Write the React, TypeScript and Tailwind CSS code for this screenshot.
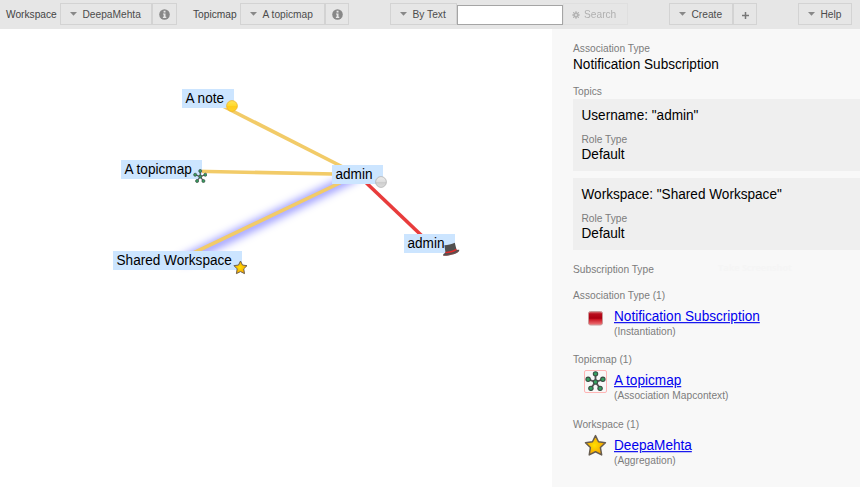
import React from "react";

const toolbarButton =
  "flex h-[22px] shrink-0 items-center border border-[#d3d3d3] bg-[#e6e6e6] text-[#4c4c4c]";

function Tall({ children }: { children: React.ReactNode }) {
  return <span className="inline-block origin-center translate-y-[0.8px] scale-y-[1.12]">{children}</span>;
}

function Caret() {
  return (
    <svg className="mr-[5.5px] ml-[9px] block shrink-0" width="7" height="4" viewBox="0 0 7 4">
      <path d="M0 0h7L3.5 3.8z" fill="#888" />
    </svg>
  );
}

function MenuButton({ label, className }: { label: string; className: string }) {
  return (
    <button className={`${toolbarButton} ${className}`}>
      <Caret />
      <Tall>{label}</Tall>
    </button>
  );
}

function InfoButton({ className }: { className: string }) {
  return (
    <button className={`${toolbarButton} justify-center ${className}`}>
      <svg width="11" height="11" viewBox="0 0 11 11">
        <circle cx="5.5" cy="5.5" r="5.3" fill="#888" />
        <path d="M4.6 1.8h1.9v1.7H4.6zM4 4.5h2.5v3.3h.8v1.1H3.9V7.8h.8V5.6H4z" fill="#e6e6e6" />
      </svg>
    </button>
  );
}

function Toolbar() {
  return (
    <header className="flex h-[29px] shrink-0 items-start bg-[#e6e6e6] pt-[3px] text-[10.2px] leading-[22px] text-[#444]">
      <span className="ml-[6px] w-[54px]"><Tall>Workspace</Tall></span>
      <MenuButton label="DeepaMehta" className="w-[92px]" />
      <InfoButton className="w-[25px]" />
      <span className="ml-[16px] w-[47px]"><Tall>Topicmap</Tall></span>
      <MenuButton label="A topicmap" className="w-[85px]" />
      <InfoButton className="w-[24px]" />
      <MenuButton label="By Text" className="ml-[41px] w-[67px]" />
      <input className="mt-[2px] h-[20px] w-[106px] shrink-0 border border-[#a5a5a5] bg-white" />
      <button className={`${toolbarButton} w-[65px] opacity-35`}>
        <svg className="mt-[2px] mr-[4px] ml-[8px]" width="8" height="8" viewBox="0 0 8 8">
          <circle cx="4" cy="4" r="2" fill="none" stroke="#555" strokeWidth="1.6" />
          <path d="M4 0v8M0 4h8M1.1 1.1l5.8 5.8M6.9 1.1L1.1 6.9" stroke="#555" strokeWidth="1" />
          <circle cx="4" cy="4" r="1" fill="#e6e6e6" />
        </svg>
        <Tall>Search</Tall>
      </button>
      <MenuButton label="Create" className="ml-[41px] w-[64px]" />
      <button className={`${toolbarButton} w-[24px] justify-center`}>
        <svg className="mt-[2px]" width="7" height="7" viewBox="0 0 7 7">
          <path d="M3.5 0v7M0 3.5h7" stroke="#777" strokeWidth="1.5" />
        </svg>
      </button>
      <MenuButton label="Help" className="ml-[41px] w-[54px]" />
    </header>
  );
}

function StarIcon({ size }: { size: number }) {
  return (
    <svg className="block" width={size} height={size} viewBox="0 0 22 22">
      <defs>
        <radialGradient id={`star${size}`} cx="45%" cy="50%" r="55%">
          <stop offset="0" stopColor="#ffe000" />
          <stop offset="1" stopColor="#f59c00" />
        </radialGradient>
      </defs>
      <path
        d="M11 1.5l2.9 5.9 6.6.9-4.800 4.700 1.200 7-5.900-3-6 3 1.100-7L1.400 8.300 8.100 7.400z"
        fill={`url(#star${size})`}
        stroke="#665c50"
        strokeWidth="1.4"
        strokeLinejoin="round"
      />
    </svg>
  );
}

function MapIcon({ size }: { size: number }) {
  const ends = [[11, 3], [3.3, 8.7], [18.7, 8.7], [6.2, 18.2], [15.8, 18.2]];
  return (
    <svg className="block" width={size} height={size} viewBox="0 0 22 22">
      {ends.map(([x, y]) => (
        <line key={x} x1="11" y1="11.5" x2={x} y2={y} stroke="#555" strokeWidth="1.9" />
      ))}
      {[...ends, [11, 11.5]].map(([x, y]) => (
        <circle key={`${x}-${y}`} cx={x} cy={y} r="2.3" fill="#35a060" stroke="#3c4c43" strokeWidth="1.1" />
      ))}
    </svg>
  );
}

function BallIcon({ tone }: { tone: "yellow" | "gray" }) {
  const yellow = tone === "yellow";
  return (
    <svg className="block" width="12" height="12" viewBox="0 0 12 12">
      <defs>
        <linearGradient id={`ball-${tone}`} x1="0" y1="0" x2="0" y2="1">
          <stop offset="0" stopColor={yellow ? "#ffe45a" : "#eeeeee"} />
          <stop offset=".48" stopColor={yellow ? "#ffd92c" : "#dddddd"} />
          <stop offset=".52" stopColor={yellow ? "#ffcc1c" : "#cccccc"} />
          <stop offset="1" stopColor={yellow ? "#ffd22a" : "#dedede"} />
        </linearGradient>
      </defs>
      <circle cx="6" cy="6" r="5.4" fill={`url(#ball-${tone})`} stroke={yellow ? "#efb62a" : "#b2b2b2"} strokeWidth=".8" />
    </svg>
  );
}

function HatIcon() {
  return (
    <svg className="block" width="18" height="15" viewBox="0 0 18 15">
      <path d="M2.4 3.2C5 3.3 9.6 2.3 12.8.8L14.6 8c1.2-.1 2.2-.4 2.6-.2.5 1.6-2.5 3.7-6.8 4.8-4.7 1.3-8.9 1.7-9.3.6C.9 12.3 2 11.5 3.5 10.7z" fill="#505050" />
      <path d="M3.2 9.9c3.5 0 8-1.3 11-3.1l.5 1.5c-2.9 2-7.5 3.2-11.1 3z" fill="#e02b2b" />
      <path d="M1.3 13.4c4.5.3 11.5-1.4 15.3-4.2" stroke="#a84848" strokeWidth=".5" fill="none" />
    </svg>
  );
}

const nodeClass =
  "absolute h-[18.5px] bg-[#cce5ff] pl-[3.5px] text-[13.6px] leading-[18px] whitespace-nowrap text-black";

function TopicmapCanvas() {
  return (
    <main className="relative w-[552px] shrink-0 overflow-hidden bg-white">
      <svg className="absolute inset-0" width="552" height="458" viewBox="0 29 552 458">
        <defs>
          <filter id="glow" filterUnits="userSpaceOnUse" x="140" y="140" width="260" height="160">
            <feGaussianBlur stdDeviation="4.5" />
          </filter>
        </defs>
        <line x1="357.5" y1="175" x2="181.5" y2="261" stroke="#0000ff" strokeOpacity=".42" strokeWidth="9" filter="url(#glow)" />
        <g stroke="#f2cb68" strokeWidth="3.6">
          <line x1="208" y1="98.5" x2="357.5" y2="174.5" />
          <line x1="161" y1="170.5" x2="357.5" y2="174.5" />
          <line x1="177.5" y1="260.5" x2="357.5" y2="174.5" />
        </g>
        <line x1="357.5" y1="174.5" x2="430" y2="243.5" stroke="#e83c3c" strokeWidth="3.6" />
      </svg>
      <div className={`${nodeClass} top-[60px] left-[182px] w-[52px]`}>
        <Tall>A note</Tall>
        <span className="absolute top-[11px] left-[44px]"><BallIcon tone="yellow" /></span>
      </div>
      <div className={`${nodeClass} top-[131px] left-[121px] w-[81px]`}>
        <Tall>A topicmap</Tall>
        <span className="absolute top-[9px] left-[71.5px]"><MapIcon size={14.5} /></span>
      </div>
      <div className={`${nodeClass} top-[222px] left-[113px] w-[129px]`}>
        <Tall>Shared Workspace</Tall>
        <span className="absolute top-[8.5px] left-[119.5px]"><StarIcon size={15} /></span>
      </div>
      <div className={`${nodeClass} top-[136px] left-[332px] w-[51px]`}>
        <Tall>admin</Tall>
        <span className="absolute top-[10.5px] left-[42.5px]"><BallIcon tone="gray" /></span>
      </div>
      <div className={`${nodeClass} top-[205px] left-[404px] w-[51px]`}>
        <Tall>admin</Tall>
        <span className="absolute top-[8px] left-[38px]"><HatIcon /></span>
      </div>
    </main>
  );
}

function Label({ children }: { children: React.ReactNode }) {
  return (
    <div className="h-[12px] text-[10.2px] leading-[12px] text-[#7c7c7c]">
      <Tall>{children}</Tall>
    </div>
  );
}

function TopicCard({ title }: { title: string }) {
  return (
    <div className="h-[72px] bg-[#efefef] pt-[8px] pl-[8.5px]">
      <div className="h-[16px] leading-[16px]"><Tall>{title}</Tall></div>
      <div className="mt-[10px]"><Label>Role Type</Label></div>
      <div className="mt-px h-[16px] leading-[16px]"><Tall>Default</Tall></div>
    </div>
  );
}

function RelatedTopic({ group, title, relation, icon }: { group: string; title: string; relation: string; icon: React.ReactNode }) {
  return (
    <section className="h-[64.3px]">
      <Label>{group}</Label>
      <div className="mt-[7px] flex pl-[11px]">
        <div className="-mt-[3px] flex h-[24px] w-[30px] shrink-0 items-center">{icon}</div>
        <div>
          <a href="#" className="block h-[17px] leading-[16px] text-[#0000ee]">
            <span className="inline-block origin-center translate-y-[0.5px] scale-y-[1.12] underline">{title}</span>
          </a>
          <Label>{relation}</Label>
        </div>
      </div>
    </section>
  );
}

function TypeIcon() {
  return (
    <svg className="block" width="23" height="23" viewBox="0 0 23 23">
      <defs>
        <linearGradient id="type" x1="0" y1="0" x2="0" y2="1">
          <stop offset="0" stopColor="#d98181" />
          <stop offset=".18" stopColor="#b90d1d" />
          <stop offset=".5" stopColor="#ab0011" />
          <stop offset=".58" stopColor="#ca1724" />
          <stop offset="1" stopColor="#f17a7c" />
        </linearGradient>
      </defs>
      <rect x="4.5" y="5.500" width="14" height="13.5" rx="2" fill="url(#type)" stroke="#c99a9a" />
    </svg>
  );
}

function DetailPanel() {
  return (
    <aside className="min-w-0 flex-1 overflow-hidden bg-[#f8f8f8] pt-[13px] pl-[21px] text-[13.6px] text-black">
      <Label>Association Type</Label>
      <div className="mt-[2px] h-[16px] leading-[16px]"><Tall>Notification Subscription</Tall></div>
      <div className="mt-[13px] mb-[2px]"><Label>Topics</Label></div>
      <div className="flex flex-col gap-[7px]">
        <TopicCard title={'Username: "admin"'} />
        <TopicCard title={'Workspace: "Shared Workspace"'} />
      </div>
      <div className="mt-[13px] mb-[14px] flex">
        <div className="w-[145px]"><Label>Subscription Type</Label></div>
        <span className="font-['Open_Sans',sans-serif] text-[9px] leading-[10px] font-bold text-[#f5f5f5]">Take Screenshot</span>
      </div>
      <RelatedTopic group="Association Type (1)" title="Notification Subscription" relation="(Instantiation)" icon={<TypeIcon />} />
      <RelatedTopic
        group="Topicmap (1)"
        title="A topicmap"
        relation="(Association Mapcontext)"
        icon={<div className="h-[23px] w-[23px] rounded-[2px] border border-[#ffb5b5]"><MapIcon size={21} /></div>}
      />
      <RelatedTopic group="Workspace (1)" title="DeepaMehta" relation="(Aggregation)" icon={<StarIcon size={23} />} />
    </aside>
  );
}

export default function App() {
  return (
    <div className="flex h-[487px] w-[860px] flex-col overflow-hidden font-['Liberation_Sans',Arial,sans-serif]">
      <Toolbar />
      <div className="flex min-h-0 flex-1">
        <TopicmapCanvas />
        <DetailPanel />
      </div>
    </div>
  );
}
